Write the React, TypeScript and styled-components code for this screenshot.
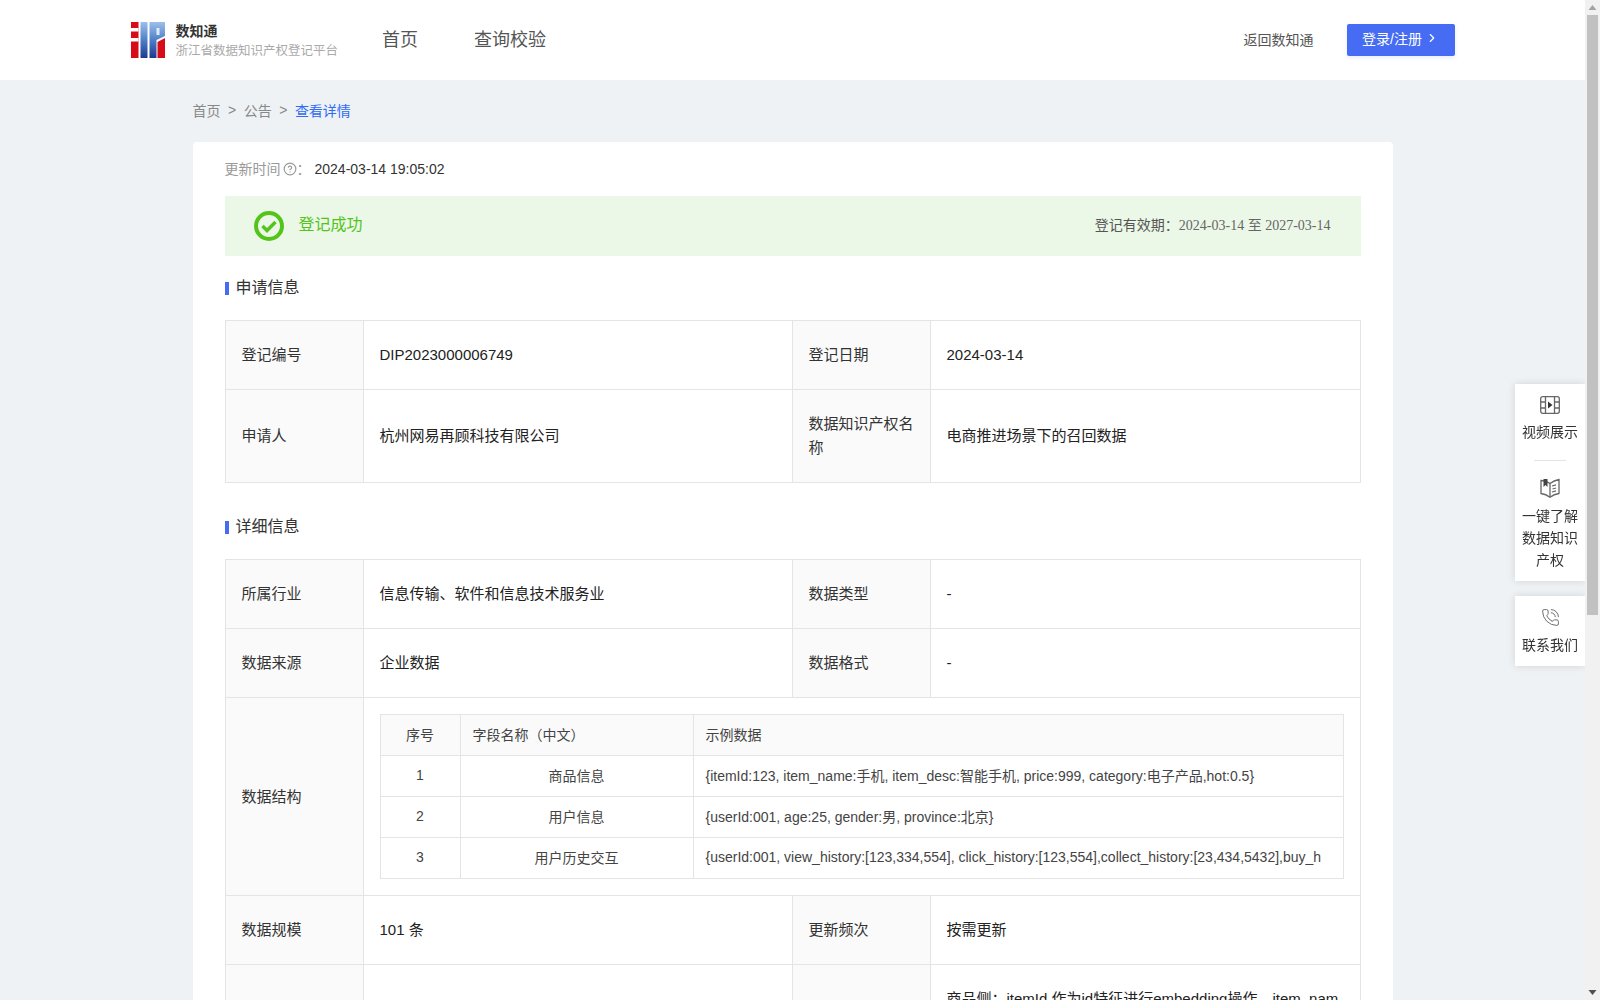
import React from 'react'
import styled, { createGlobalStyle } from 'styled-components'
import { ChevronRight, CircleHelp, PhoneCall } from 'lucide-react'

const GlobalStyle = createGlobalStyle`
  body {
    margin: 0;
    background: #eef2f5;
    color: #333;
    font-family: "Liberation Sans", "Noto Sans CJK SC", sans-serif;
    font-size: 14px;
  }
`

const Page = styled.div`
  min-height: 1610px;
  padding-right: 15px;
  display: flex;
  flex-direction: column;
`

const ScrollTrack = styled.div`
  position: fixed;
  top: 0;
  right: 0;
  width: 15px;
  height: 100vh;
  background: #f1f1f1;
  display: flex;
  flex-direction: column;
  align-items: center;
`

const ScrollThumb = styled.div`
  width: 11px;
  height: 600px;
  background: #c1c1c1;
`

const ScrollArrow = styled.svg<{ $down?: boolean }>`
  flex: none;
  ${(props) => props.$down && 'margin-top: auto;'}
`

const Header = styled.header`
  height: 80px;
  background: #fff;
  flex: none;
`

const HeaderInner = styled.div`
  width: 1324px;
  height: 100%;
  margin: 0 auto;
  display: flex;
  align-items: center;
`

const Brand = styled.div`
  display: flex;
  align-items: center;
  gap: 11px;
`

const BrandText = styled.div`
  display: flex;
  flex-direction: column;
  gap: 1px;
`

const BrandName = styled.div`
  font-size: 14px;
  line-height: 20px;
  font-weight: 700;
  color: #333;
`

const BrandSub = styled.div`
  font-size: 12.5px;
  line-height: 18px;
  color: #aaa;
`

const Nav = styled.nav`
  display: flex;
  gap: 56px;
  margin: 0 0 4px 44px;
`

const NavLink = styled.a`
  font-size: 18px;
  color: #555;
  cursor: pointer;
`

const HeaderRight = styled.div`
  margin-left: auto;
  display: flex;
  align-items: center;
  gap: 33px;
`

const BackLink = styled.a`
  color: #555;
  font-size: 14px;
  margin-bottom: 2px;
`

const LoginButton = styled.button`
  width: 108px;
  height: 32px;
  border: 0;
  border-radius: 2px;
  background: #456cf3;
  box-shadow: 0 2px 4px rgba(69, 108, 243, 0.12);
  color: #fff;
  font: inherit;
  font-size: 14px;
  display: flex;
  align-items: center;
  justify-content: center;
  gap: 3px;
  padding: 0 0 4px;
`

const Main = styled.main`
  width: 1200px;
  margin: 0 auto;
  flex: 1;
  display: flex;
  flex-direction: column;
`

const Breadcrumb = styled.div`
  height: 60px;
  padding-bottom: 2px;
  display: flex;
  align-items: center;
  gap: 7.5px;
  color: #888;
  flex: none;
`

const CrumbCurrent = styled.span`
  color: #2f6bf5;
`

const Card = styled.section`
  flex: 1;
  background: #fff;
  border-radius: 4px 4px 0 0;
  padding: 0 32px;
`

const UpdateRow = styled.div`
  height: 54px;
  display: flex;
  align-items: center;
  color: #999;
`

const UpdateLabel = styled.span`
  margin-bottom: 3px;
`

const UpdateValue = styled.span`
  color: #333;
  margin-left: 4px;
`

const HelpIcon = styled(CircleHelp)`
  margin-left: 2px;
  color: #999;
`

const Banner = styled.div`
  height: 60px;
  background: #ebf7e7;
  display: flex;
  align-items: center;
  padding: 0 30px 0 29px;
`

const BannerTitle = styled.span`
  margin: 0 0 6px 15px;
  font-size: 16px;
  color: #52c41a;
`

const Validity = styled.span`
  margin: 0 0 5px auto;
  color: #555;
`

const ValidityDate = styled.span`
  font-family: "Liberation Serif", "Noto Sans CJK SC", serif;
  color: #666;
`

const SectionTitle = styled.h3`
  margin: 0;
  height: 64px;
  box-sizing: border-box;
  padding-bottom: 2px;
  display: flex;
  align-items: center;
  font-size: 16px;
  font-weight: 400;
  color: #333;
`

const SectionBar = styled.span`
  width: 4px;
  height: 13px;
  margin: 3px 7px 0 0;
  background: #456cf3;
`

const SectionText = styled.span`
  margin-bottom: 2px;
`

const InfoTable = styled.table`
  width: 1135px;
  table-layout: fixed;
  border-collapse: collapse;
  margin-bottom: 12px;
`

const LabelCell = styled.th`
  padding: 22px 16px;
  border: 1px solid #e4e4e4;
  background: #fafafa;
  font-size: 15px;
  font-weight: 400;
  line-height: 24px;
  text-align: left;
  color: #333;
`

const ValueCell = styled.td<{ $top?: boolean }>`
  padding: 22px 16px;
  border: 1px solid #e4e4e4;
  font-size: 15px;
  line-height: 24px;
  color: #222;
  word-break: break-all;
  vertical-align: ${(props) => (props.$top ? 'top' : 'middle')};
`

const NestedCell = styled.td`
  padding: 16px;
  border: 1px solid #e4e4e4;
`

const FieldTable = styled.table`
  width: 963px;
  table-layout: fixed;
  border-collapse: collapse;
`

const FieldHead = styled.th<{ $center?: boolean }>`
  height: 41px;
  padding: 0 12px 2px;
  box-sizing: border-box;
  border: 1px solid #e4e4e4;
  background: #fafafa;
  font-weight: 400;
  text-align: ${(props) => (props.$center ? 'center' : 'left')};
  color: #444;
`

const FieldCell = styled.td<{ $center?: boolean }>`
  height: 41px;
  padding: 0 12px 2px;
  box-sizing: border-box;
  border: 1px solid #e4e4e4;
  text-align: ${(props) => (props.$center ? 'center' : 'left')};
  color: #444;
  white-space: nowrap;
  overflow: hidden;
`

const SideRail = styled.aside`
  position: fixed;
  top: 384px;
  right: 15px;
  width: 70px;
  display: flex;
  flex-direction: column;
  gap: 15px;
`

const SideGroup = styled.div`
  background: #fff;
  box-shadow: 0 0 8px rgba(0, 0, 0, 0.12);
  display: flex;
  flex-direction: column;
  align-items: center;
`

const SideItem = styled.a`
  display: flex;
  flex-direction: column;
  align-items: center;
  width: 100%;
  padding: 12px 0 10px;
  color: #333;
  text-align: center;
  line-height: 22px;

  svg {
    margin-bottom: 7px;
  }
`

const SideDivider = styled.div`
  width: 32px;
  height: 1px;
  margin: 7px 0 5px;
  background: #e4e4e4;
`

const Logo = () => (
  <svg width="34" height="36" viewBox="0 0 34 36">
    <defs>
      <linearGradient id="logoBlue" x1="0" y1="0" x2="0" y2="1">
        <stop offset="0" stopColor="#9cc0ea" />
        <stop offset="0.5" stopColor="#4f7fc8" />
        <stop offset="1" stopColor="#1d3a8c" />
      </linearGradient>
    </defs>
    <rect x="0" y="0" width="7.5" height="36" fill="#d80c18" />
    <rect x="0" y="6" width="7.5" height="3.5" fill="#fff" />
    <rect x="0" y="16" width="7.5" height="3.5" fill="#fff" />
    <rect x="9.5" y="0" width="7" height="36" fill="url(#logoBlue)" />
    <path d="M18.5 0 H34 V14 L25.5 18 V36 H18.5 Z" fill="url(#logoBlue)" />
    <rect x="25.5" y="6" width="3" height="7" fill="#dfe9f7" />
    <path d="M26.5 20 L34 16 V36 H26.5 Z" fill="#d80c18" />
  </svg>
)

const SuccessIcon = () => (
  <svg width="30" height="30" viewBox="0 0 30 30" fill="none">
    <circle cx="15" cy="15" r="13" stroke="#52c41a" strokeWidth="4" />
    <path d="M8.5 15 L13 19.5 L21.5 11" stroke="#52c41a" strokeWidth="3.4" />
  </svg>
)

const VideoIcon = () => (
  <svg width="20" height="18" viewBox="0 0 20 18" fill="none" stroke="#666" strokeWidth="1.3">
    <rect x="0.7" y="0.7" width="18.6" height="16.6" rx="2" />
    <path d="M5.5 1 V17 M14.5 1 V17 M1 6 H5.5 M1 12 H5.5 M14.5 6 H19 M14.5 12 H19" />
    <path d="M8 5.5 L12.5 9 L8 12.5 Z" fill="#333" stroke="none" />
  </svg>
)

const BookIcon = () => (
  <svg width="20" height="20" viewBox="0 0 20 20" fill="none" stroke="#666" strokeWidth="1.3">
    <path d="M1 2.5 Q6 2.5 10 5.5 Q14 2.5 19 1.5 V15.5 Q14 16 10 19.3 Q6 16 1 15.5 Z" />
    <path d="M10 5.5 V19" />
    <path d="M3.5 1 H7.5 V9 L5.5 7 L3.5 9 Z" fill="#444" stroke="none" />
    <path d="M12 8 L16 6.8 M12.5 11 L16 10 M12 14 L16 12.8" />
  </svg>
)

const rows = [
  { id: 1, name: '商品信息', sample: '{itemId:123, item_name:手机, item_desc:智能手机, price:999, category:电子产品,hot:0.5}' },
  { id: 2, name: '用户信息', sample: '{userId:001, age:25, gender:男, province:北京}' },
  { id: 3, name: '用户历史交互', sample: '{userId:001, view_history:[123,334,554], click_history:[123,554],collect_history:[23,434,5432],buy_h' },
]

const InfoCols = () => (
  <colgroup>
    <col width="138" />
    <col width="429" />
    <col width="138" />
    <col width="430" />
  </colgroup>
)

const App = () => {
  return (
    <Page>
      <GlobalStyle />
      <Header>
        <HeaderInner>
          <Brand>
            <Logo />
            <BrandText>
              <BrandName>数知通</BrandName>
              <BrandSub>浙江省数据知识产权登记平台</BrandSub>
            </BrandText>
          </Brand>
          <Nav>
            <NavLink>首页</NavLink>
            <NavLink>查询校验</NavLink>
          </Nav>
          <HeaderRight>
            <BackLink>返回数知通</BackLink>
            <LoginButton>
              登录/注册
              <ChevronRight size={14} />
            </LoginButton>
          </HeaderRight>
        </HeaderInner>
      </Header>

      <Main>
        <Breadcrumb>
          <span>首页</span>
          <span>&gt;</span>
          <span>公告</span>
          <span>&gt;</span>
          <CrumbCurrent>查看详情</CrumbCurrent>
        </Breadcrumb>

        <Card>
          <UpdateRow>
            <UpdateLabel>更新时间</UpdateLabel>
            <HelpIcon size={14} />
            <UpdateLabel>：</UpdateLabel>
            <UpdateValue>2024-03-14 19:05:02</UpdateValue>
          </UpdateRow>

          <Banner>
            <SuccessIcon />
            <BannerTitle>登记成功</BannerTitle>
            <Validity>
              登记有效期：<ValidityDate>2024-03-14 至 2027-03-14</ValidityDate>
            </Validity>
          </Banner>

          <SectionTitle>
            <SectionBar />
            <SectionText>申请信息</SectionText>
          </SectionTitle>
          <InfoTable>
            <InfoCols />
            <tbody>
              <tr>
                <LabelCell>登记编号</LabelCell>
                <ValueCell>DIP2023000006749</ValueCell>
                <LabelCell>登记日期</LabelCell>
                <ValueCell>2024-03-14</ValueCell>
              </tr>
              <tr>
                <LabelCell>申请人</LabelCell>
                <ValueCell>杭州网易再顾科技有限公司</ValueCell>
                <LabelCell>数据知识产权名称</LabelCell>
                <ValueCell>电商推进场景下的召回数据</ValueCell>
              </tr>
            </tbody>
          </InfoTable>

          <SectionTitle>
            <SectionBar />
            <SectionText>详细信息</SectionText>
          </SectionTitle>
          <InfoTable>
            <InfoCols />
            <tbody>
              <tr>
                <LabelCell>所属行业</LabelCell>
                <ValueCell>信息传输、软件和信息技术服务业</ValueCell>
                <LabelCell>数据类型</LabelCell>
                <ValueCell>-</ValueCell>
              </tr>
              <tr>
                <LabelCell>数据来源</LabelCell>
                <ValueCell>企业数据</ValueCell>
                <LabelCell>数据格式</LabelCell>
                <ValueCell>-</ValueCell>
              </tr>
              <tr>
                <LabelCell>数据结构</LabelCell>
                <NestedCell colSpan={3}>
                  <FieldTable>
                    <colgroup>
                      <col width="80" />
                      <col width="233" />
                      <col width="650" />
                    </colgroup>
                    <thead>
                      <tr>
                        <FieldHead $center>序号</FieldHead>
                        <FieldHead>字段名称（中文）</FieldHead>
                        <FieldHead>示例数据</FieldHead>
                      </tr>
                    </thead>
                    <tbody>
                      {rows.map((row) => (
                        <tr key={row.id}>
                          <FieldCell $center>{row.id}</FieldCell>
                          <FieldCell $center>{row.name}</FieldCell>
                          <FieldCell>{row.sample}</FieldCell>
                        </tr>
                      ))}
                    </tbody>
                  </FieldTable>
                </NestedCell>
              </tr>
              <tr>
                <LabelCell>数据规模</LabelCell>
                <ValueCell>101 条</ValueCell>
                <LabelCell>更新频次</LabelCell>
                <ValueCell>按需更新</ValueCell>
              </tr>
              <tr>
                <LabelCell />
                <ValueCell />
                <LabelCell />
                <ValueCell $top>商品侧：itemId 作为id特征进行embedding操作，item_name</ValueCell>
              </tr>
            </tbody>
          </InfoTable>
        </Card>
      </Main>

      <SideRail>
        <SideGroup>
          <SideItem>
            <VideoIcon />
            视频展示
          </SideItem>
          <SideDivider />
          <SideItem>
            <BookIcon />
            一键了解
            <br />
            数据知识
            <br />
            产权
          </SideItem>
        </SideGroup>
        <SideGroup>
          <SideItem>
            <PhoneCall size={19} color="#666" strokeWidth={1.2} />
            联系我们
          </SideItem>
        </SideGroup>
      </SideRail>

      <ScrollTrack>
        <ScrollArrow width="15" height="15" viewBox="0 0 15 15">
          <path d="M3.5 10 L7.5 5 L11.5 10 Z" fill="#a3a3a3" />
        </ScrollArrow>
        <ScrollThumb />
        <ScrollArrow $down width="15" height="15" viewBox="0 0 15 15">
          <path d="M3.5 5 L7.5 10 L11.5 5 Z" fill="#505050" />
        </ScrollArrow>
      </ScrollTrack>
    </Page>
  )
}

export default App
